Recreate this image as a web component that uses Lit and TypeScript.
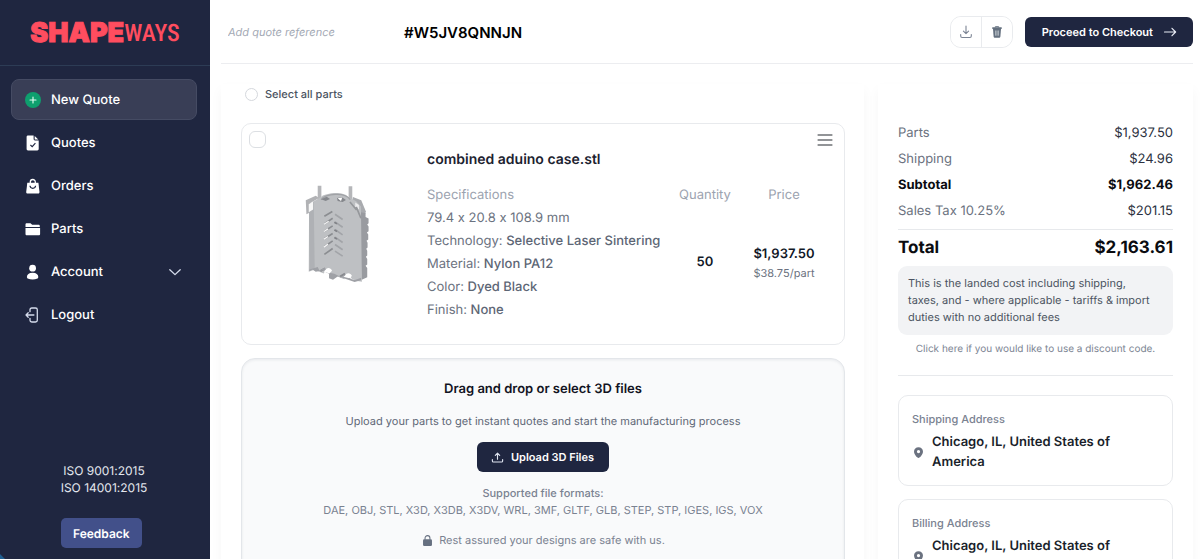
import { LitElement, html, css, svg, nothing } from "lit";
import { customElement } from "lit/decorators.js";

const icon = (body: unknown, size = 16) =>
  html`<svg width=${size} height=${size} viewBox="0 0 16 16" aria-hidden="true">${body}</svg>`;

const plusIcon = icon(svg`
  <circle cx="8" cy="8" r="8" fill="#0e9f6e"/>
  <path d="M8 5v6M5 8h6" stroke="#e6fff5" stroke-width="1.1" stroke-linecap="round"/>`);
const quoteIcon = icon(svg`
  <path d="M3 .5h5.6v3.6c0 .8.6 1.4 1.4 1.4h3.700v8.600c0 .9-.6 1.400-1.400 1.400H3c-.8 0-1.400-.5-1.400-1.400V1.900C1.600 1.100 2.200.5 3 .5z" fill="#fff"/>
  <path d="M9.700.9l3.600 3.600H9.700z" fill="#fff"/>
  <path d="M5.400 10l1.800 1.700 3.200-3.600" fill="none" stroke="#1f2640" stroke-width="1.100"/>`);
const bagIcon = icon(svg`
  <path d="M5.300 5.500V4a2.500 2.500 0 0 1 5 0v1.500" fill="none" stroke="#fff" stroke-width="1.300"/>
  <path d="M2.300 4.700h11.100l1.100 9.200c.1.900-.4 1.500-1.300 1.500H2.500c-.9 0-1.400-.6-1.300-1.500z" fill="#fff"/>
  <path d="M5 7.800c.3 3.300 5.300 3.300 5.600 0" fill="none" stroke="#1f2640" stroke-width="1.200"/>`);
const folderIcon = icon(svg`
  <path d="M.5 6V3.500C.5 2.700 1 2.200 1.800 2.200h3.700l1.700 1.600h6.300c.8 0 1.300.5 1.300 1.200v1z" fill="#fff"/>
  <path d="M.5 7h14.600v5.900c0 .9-.5 1.400-1.400 1.400H1.900C1 14.300.5 13.800.5 12.900z" fill="#fff"/>`);
const userIcon = icon(svg`
  <circle cx="7.600" cy="4.200" r="3.400" fill="#fff"/>
  <path d="M1.900 13c0-2.600 2-4.200 5.700-4.200s5.700 1.600 5.700 4.200c0 1.800-2 2.400-5.700 2.400S1.900 14.800 1.900 13z" fill="#fff"/>`);
const logoutIcon = icon(svg`
  <path d="M5 4.700V2.800C5 1.700 5.700 1 6.800 1h3.700c1.100 0 1.800.7 1.800 1.800v10.400c0 1.100-.7 1.800-1.800 1.800H6.800C5.700 15 5 14.300 5 13.200v-1.900M8.900 8H1M3.200 5.800L1 8l2.200 2.200" fill="none" stroke="#d5dcec" stroke-width="1.300" stroke-linecap="round" stroke-linejoin="round"/>`);
const chevronIcon = icon(svg`
  <path d="M2.800 5.700L8 10.600l5.200-4.900" fill="none" stroke="#d5dcec" stroke-width="1.300" stroke-linecap="round" stroke-linejoin="round"/>`);
const downloadIcon = icon(svg`
  <path d="M8 2v7.600M5.400 7.200L8 9.700l2.600-2.500M2.700 10.500v1.600c0 .9.500 1.400 1.400 1.400h7.800c.9 0 1.400-.5 1.400-1.400v-1.600" fill="none" stroke="#7b8494" stroke-width="1.100" stroke-linecap="round" stroke-linejoin="round"/>`);
const uploadIcon = icon(svg`
  <path d="M8 10V3M5.300 5.300L8 2.700l2.700 2.600M1.700 10.400v1.800c0 .9.500 1.400 1.400 1.400h9.800c.9 0 1.400-.5 1.400-1.400v-1.800" fill="none" stroke="#dfe4f0" stroke-width="1.400" stroke-linecap="round" stroke-linejoin="round"/>`, 13);
const trashIcon = icon(svg`
  <path d="M6.300 3.500V2.700h3.400v.8" fill="none" stroke="#64707f" stroke-width="1"/>
  <path d="M3.300 3.300h9.400v1.600H3.300z" fill="#64707f"/>
  <path d="M4 5h8l-.6 7.400c-.1.900-.6 1.300-1.400 1.300H6c-.8 0-1.300-.4-1.400-1.300z" fill="#64707f"/>
  <path d="M6.900 6.500v5.200M9.100 6.500v5.200" stroke="#e2e6ea" stroke-width=".9"/>`);
const arrowIcon = icon(svg`
  <path d="M2.500 8h11M10 4.300L13.600 8 10 11.700" fill="none" stroke="#e8ebf4" stroke-width="1.200" stroke-linecap="round" stroke-linejoin="round"/>`);
const menuIcon = icon(svg`
  <path d="M.6 3h14.800M.6 8h14.800M.6 13h14.800" stroke="#6f7276" stroke-width="1.300"/>`);
const lockIcon = icon(svg`
  <path d="M5 7V5a3 3 0 0 1 6 0v2" fill="none" stroke="#667080" stroke-width="1.300"/>
  <rect x="2.500" y="6.500" width="11" height="8.200" rx="1.500" fill="#667080"/>`, 13);
const pinIcon = icon(svg`
  <path fill-rule="evenodd" d="M8 1.500c3.200 0 5.500 2.300 5.500 5.300 0 3.700-3.700 7.900-5.500 7.900S2.500 10.500 2.500 6.800C2.500 3.800 4.800 1.500 8 1.500zm0 3.300a2 2 0 1 0 0 4 2 2 0 0 0 0-4z" fill="#6b7280"/>`, 13);

const partDrawing = html`
  <svg width="74" height="103" viewBox="53 43 222 310" role="img" aria-label="Model preview">
    <path d="M76 92l30-14 10 7-26 15v28l-12 6z" fill="#b1b2b5"/>
    <path d="M218 82l25 10 14 34-5 14-18-14-20-22z" fill="#a9abaf"/>
    <path d="M112 48h11v42h-11zM205 50h11v42h-11z" fill="#b5b6b9"/>
    <path d="M240 128l16 2v12l9 5v14l-4 4 4 6v14l-5 4 4 6v15l-5 4 3 6v14l-4 4 3 6v14l-4 4 4 7v16l-5 4 5 7v28l-18 8z" fill="#999ba0"/>
    <path d="M86 104l14-9 22-13c12-12 66-19 82 0l24 13 14 16 3 226-14-2-17-7c-4-13-19-12-22 2l-42-17c-3-11-17-11-20-1l-28-11-17 6z" fill="#bec0c3"/>
    <path d="M86 104l14-8 3 202-16 6z" fill="#afb1b5"/>
    <path d="M122 90c14-18 72-24 88 0" fill="none" stroke="#a0a2a6" stroke-width="4"/>
    <path d="M122 89l17-8 10 7-13 6zM170 85l15-2 12 8-10 6-15-3z" fill="#85878c"/>
    <path d="M172 86l14-2-4 10z" fill="#fff"/>
    <path d="M85 104l13-8v24l-13 8z" fill="#f7f7f7"/>
    <path d="M225 99l11 7v14l-11-8z" fill="#ececee"/>
    <path d="M209 97l20 24M228 112l14 34" stroke="#95979b" stroke-width="5"/>
    <path d="M132 140l24-14M132 163l25-17M132 185l25-16M132 208l25-16M132 232l25-18M132 255l25-18" stroke="#8b8d91" stroke-width="5"/>
    <path d="M164 134l23 16M164 157l23 16M164 180l23 16M164 203l23 16M164 225l23 16M164 245l23 15" stroke="#a2a4a8" stroke-width="5"/>
    <path d="M131 164l14-9M131 186l12-8M131 209l12-8M131 233l12-9" stroke="#f3f3f4" stroke-width="4"/>
    <path d="M162 158l8 5M162 181l8 5M162 204l8 5" stroke="#808287" stroke-width="5"/>
    <path d="M120 305l14-8M179 322l15-9" stroke="#888a8f" stroke-width="6"/>
    <path d="M87 300l25-7 5 10 15-8 15 15 15 3 20 10 15-9 15 15 12 3 19-7-1 8-19 5-50-17-15 10-12-4v-14l-20-10-20 4-10-7-9 5z" fill="#9fa1a6"/>
    <path d="M135 302c5-9 16-8 20 2l-8 8-17-6zM194 319c5-10 17-9 21 1l-8 7-18-5z" fill="#fff"/>
  </svg>`;

interface NavItem { label: string; icon: unknown; active?: boolean; chevron?: boolean }
const NAV: NavItem[] = [
  { label: "New Quote", icon: plusIcon, active: true },
  { label: "Quotes", icon: quoteIcon },
  { label: "Orders", icon: bagIcon },
  { label: "Parts", icon: folderIcon },
  { label: "Account", icon: userIcon, chevron: true },
  { label: "Logout", icon: logoutIcon },
];

const base = css`
  *, *::before, *::after { box-sizing: border-box; }
  svg { display: block; flex: none; }
  a { color: inherit; text-decoration: none; }
  button { font: inherit; text-rendering: inherit; cursor: pointer; margin: 0; border: 0; }
  p, h1, h2, dl, dd, dt, ul { margin: 0; padding: 0; }
`;

@customElement("side-nav")
export class SideNav extends LitElement {
  static styles = [base, css`
    :host {
      display: flex; flex-direction: column; color: #fff;
      background: linear-gradient(45deg, #1f5f92 3px, transparent 4px), #1f2640;
    }
    .brand {
      height: 66px; flex: none; display: flex; align-items: center; justify-content: center;
      border-bottom: 1px solid #2d3c55; color: #ff4d5f; line-height: 28px;
    }
    .wide { font-weight: 900; font-size: 27px; -webkit-text-stroke: 1px #ff4d5f; }
    .narrow { font-family: "Roboto Condensed", "Roboto", sans-serif; font-weight: 500; font-size: 24px; }
    .list { list-style: none; display: grid; gap: 2px; padding: 13px 13px 0 11px; }
    .item {
      display: flex; align-items: center; gap: 10px; height: 41px; padding: 1px 13px 0;
      border: 1px solid transparent; border-radius: 8px; font-size: 13px; font-weight: 500;
    }
    .active { background: #393e56; border-color: #454b63; }
    .label { flex: 1; }
    .foot { margin-top: auto; padding: 0 2px 11px 0; text-align: center; font-size: 12px; line-height: 17px; color: #e3e6ee; }
    .feedback {
      display: block; margin: 22px auto 0 61px; padding: 0 12px; height: 30px; border-radius: 5px;
      background: #42508a; color: #fff; font-weight: 600; font-size: 12px;
    }
  `];
  render() {
    return html`
      <a class="brand" href="#" aria-label="Shapeways"><span class="wide">SHAPE</span><span class="narrow">WAYS</span></a>
      <nav><ul class="list">
        ${NAV.map((n) => html`<li><a href="#" class="item ${n.active ? "active" : ""}">
          ${n.icon}<span class="label">${n.label}</span>${n.chevron ? chevronIcon : nothing}</a></li>`)}
      </ul></nav>
      <div class="foot">
        <p>ISO 9001:2015</p><p>ISO 14001:2015</p>
        <button class="feedback">Feedback</button>
      </div>`;
  }
}

@customElement("part-card")
export class PartCard extends LitElement {
  static styles = [base, css`
    :host {
      display: grid; grid-template-columns: 185px minmax(0, 1fr) 72px 86px; align-items: start;
      position: relative; border: 1px solid #e8eaed; border-radius: 10px; background: #fff;
      padding: 24px 17px 22px 0; font-size: 13px; line-height: 23px; color: #6b7280;
    }
    .pick {
      position: absolute; left: 7px; top: 7px; margin: 0; width: 17px; height: 17px;
      appearance: none; border: 1px solid #dcdfe3; border-radius: 6px; background: #fff;
    }
    .menu { position: absolute; right: 11px; top: 8px; padding: 0; background: none; }
    .thumb { align-self: center; display: flex; justify-content: center; }
    .name { font-size: 14px; line-height: 24px; font-weight: 600; color: #1c2230; margin-bottom: 11px; }
    .head { color: #9ca3af; line-height: 24px; }
    .value { font-weight: 500; color: #5d6675; }
    .col { padding-top: 35px; text-align: center; }
    .qty { margin-top: 44px; font-weight: 600; font-size: 13px; color: #111827; }
    .price { margin-top: 37px; line-height: 20px; font-weight: 600; color: #111827; }
    .each { font-size: 11px; line-height: 18px; }
  `];
  render() {
    const specs = [["Technology", "Selective Laser Sintering"], ["Material", "Nylon PA12"], ["Color", "Dyed Black"], ["Finish", "None"]];
    return html`
      <input class="pick" type="checkbox" aria-label="Select combined aduino case.stl">
      <button class="menu" aria-label="Part menu">${menuIcon}</button>
      <div class="thumb">${partDrawing}</div>
      <div>
        <h2 class="name">combined aduino case.stl</h2>
        <p class="head">Specifications</p>
        <p>79.4 x 20.8 x 108.9 mm</p>
        ${specs.map(([k, v]) => html`<p>${k}: <span class="value">${v}</span></p>`)}
      </div>
      <div class="col"><p class="head">Quantity</p><p class="qty">50</p></div>
      <div class="col"><p class="head">Price</p><p class="price">$1,937.50</p><p class="each">$38.75/part</p></div>`;
  }
}

@customElement("upload-card")
export class UploadCard extends LitElement {
  static styles = [base, css`
    :host {
      display: flex; flex-direction: column; align-items: center; padding: 18px 20px 24px;
      border: 1px solid #e3e6ea; border-radius: 14px; background: #f9fafb;
      box-shadow: inset 0 1px 3px rgba(30, 40, 60, 0.08);
      font-size: 11px; line-height: 17px; color: #7a8291; text-align: center;
    }
    .title { font-size: 13px; line-height: 24px; font-weight: 600; color: #111322; }
    .lead { margin: 12px 0; color: #5f6877; }
    .upload {
      display: flex; align-items: center; gap: 7px; height: 30px; padding: 0 15px 0 14px; border-radius: 6px;
      background: #1f2640; color: #fff; font-weight: 600;
    }
    .formats { margin-top: 13px; }
    .strong { font-weight: 500; }
    .safe { display: flex; align-items: center; gap: 5px; margin-top: 13px; }
  `];
  render() {
    return html`
      <h2 class="title">Drag and drop or select 3D files</h2>
      <p class="lead">Upload your parts to get instant quotes and start the manufacturing process</p>
      <button class="upload">${uploadIcon}Upload 3D Files</button>
      <p class="formats strong">Supported file formats:</p>
      <p>DAE, OBJ, STL, X3D, X3DB, X3DV, WRL, 3MF, GLTF, GLB, STEP, STP, IGES, IGS, VOX</p>
      <p class="safe">${lockIcon}Rest assured your designs are safe with us.</p>`;
  }
}

@customElement("order-summary")
export class OrderSummary extends LitElement {
  static styles = [base, css`
    :host { display: block; padding: 36px 20px 20px; font-size: 13px; color: #6b7280; }
    .row { display: flex; justify-content: space-between; line-height: 26px; }
    .amount { color: #2b3140; }
    .bold, .bold .amount { font-weight: 700; color: #0b0c10; }
    .total { font-size: 17px; margin-top: 5px; padding-top: 4px; border-top: 1px solid #e7e9ec; line-height: 28px; }
    .note {
      margin-top: 4px; padding: 9px 18px 9px 10px; border-radius: 9px; background: #f2f3f5; color: #4b5361;
      font-size: 11px; line-height: 17px;
    }
    .code { display: block; margin-top: 6px; text-align: center; font-size: 10px; line-height: 16px; color: #7d8593; }
    .rule { border: 0; border-top: 1px solid #e7e9ec; margin: 18px 0 19px; }
    .address { padding: 12px 13px 13px; border: 1px solid #e8eaed; border-radius: 10px; margin-bottom: 13px; }
    .kind { font-size: 11px; line-height: 22px; font-weight: 500; color: #7a8291; }
    .place { display: flex; align-items: center; gap: 7px; margin-top: 2px; font-size: 13px; line-height: 20px; font-weight: 600; color: #1a1f2b; }
  `];
  render() {
    const row = (k: string, v: string, c = "") =>
      html`<div class="row ${c}"><dt>${k}</dt><dd class="amount">${v}</dd></div>`;
    return html`
      <dl>
        ${row("Parts", "$1,937.50")} ${row("Shipping", "$24.96")}
        ${row("Subtotal", "$1,962.46", "bold")} ${row("Sales Tax 10.25%", "$201.15")}
        ${row("Total", "$2,163.61", "bold total")}
      </dl>
      <p class="note">This is the landed cost including shipping, taxes, and - where applicable - tariffs &amp; import duties with no additional fees</p>
      <a class="code" href="#">Click here if you would like to use a discount code.</a>
      <hr class="rule">
      ${["Shipping Address", "Billing Address"].map((kind) => html`
        <section class="address">
          <p class="kind">${kind}</p>
          <p class="place">${pinIcon}<span>Chicago, IL, United States of America</span></p>
        </section>`)}`;
  }
}

@customElement("app-root")
export class AppRoot extends LitElement {
  static styles = [base, css`
    :host {
      display: grid; grid-template-columns: 210px minmax(0, 1fr); grid-template-rows: minmax(0, 1fr);
      height: 100vh; overflow: hidden; font-family: "Inter", sans-serif; font-feature-settings: "calt" 0;
      text-rendering: geometricPrecision; background: #fff; color: #111827;
    }
    .page { padding: 0 7px 0 11px; overflow: hidden; }
    .top {
      display: flex; align-items: center; height: 64px; padding: 1px 0 0 7px;
      border-bottom: 1px solid #ecedf0;
    }
    .ref {
      width: 176px; padding: 0; border: 0; outline: 0; background: none;
      font: italic 11px "Inter", sans-serif; text-rendering: inherit; color: #111827;
    }
    .ref::placeholder { color: #a3a9b4; opacity: 1; }
    .code { flex: 1; font-size: 15px; font-weight: 600; color: #000; }
    .tools { display: flex; border: 1px solid #e9ebee; border-radius: 11px; overflow: hidden; margin-right: 12px; }
    .tool { display: flex; align-items: center; justify-content: center; width: 30px; height: 30px; padding: 0; background: #fff; }
    .tool + .tool { border-left: 1px solid #e9ebee; width: 31px; }
    .checkout {
      display: flex; align-items: center; gap: 9px; height: 30px; padding: 0 15px 0 17px; border-radius: 6px;
      background: #1f2640; color: #fff; font-size: 11px; font-weight: 600;
    }
    .body { display: grid; grid-template-columns: minmax(0, 1fr) 315px; gap: 14px; padding-top: 20px; }
    .panel { background: #fff; box-shadow: 0 6px 12px rgba(20, 30, 50, 0.04); min-height: 620px; }
    .parts { display: flex; flex-direction: column; gap: 13px; padding: 0 19px 20px 20px; }
    .all { display: flex; align-items: center; gap: 7px; height: 20px; margin-bottom: 6px; padding-left: 4px; font-size: 11px; font-weight: 500; color: #4b5361; }
    .all input { appearance: none; margin: 0; width: 13px; height: 13px; border: 1px solid #d5d8dd; border-radius: 50%; background: #fff; }
  `];
  render() {
    return html`
      <side-nav></side-nav>
      <div class="page">
        <header class="top">
          <input class="ref" type="text" placeholder="Add quote reference" aria-label="Quote reference">
          <h1 class="code">#W5JV8QNNJN</h1>
          <div class="tools">
            <button class="tool" aria-label="Download">${downloadIcon}</button>
            <button class="tool" aria-label="Delete">${trashIcon}</button>
          </div>
          <button class="checkout">Proceed to Checkout ${arrowIcon}</button>
        </header>
        <div class="body">
          <main class="panel parts">
            <label class="all"><input type="checkbox">Select all parts</label>
            <part-card></part-card>
            <upload-card></upload-card>
          </main>
          <aside class="panel"><order-summary></order-summary></aside>
        </div>
      </div>`;
  }
}
